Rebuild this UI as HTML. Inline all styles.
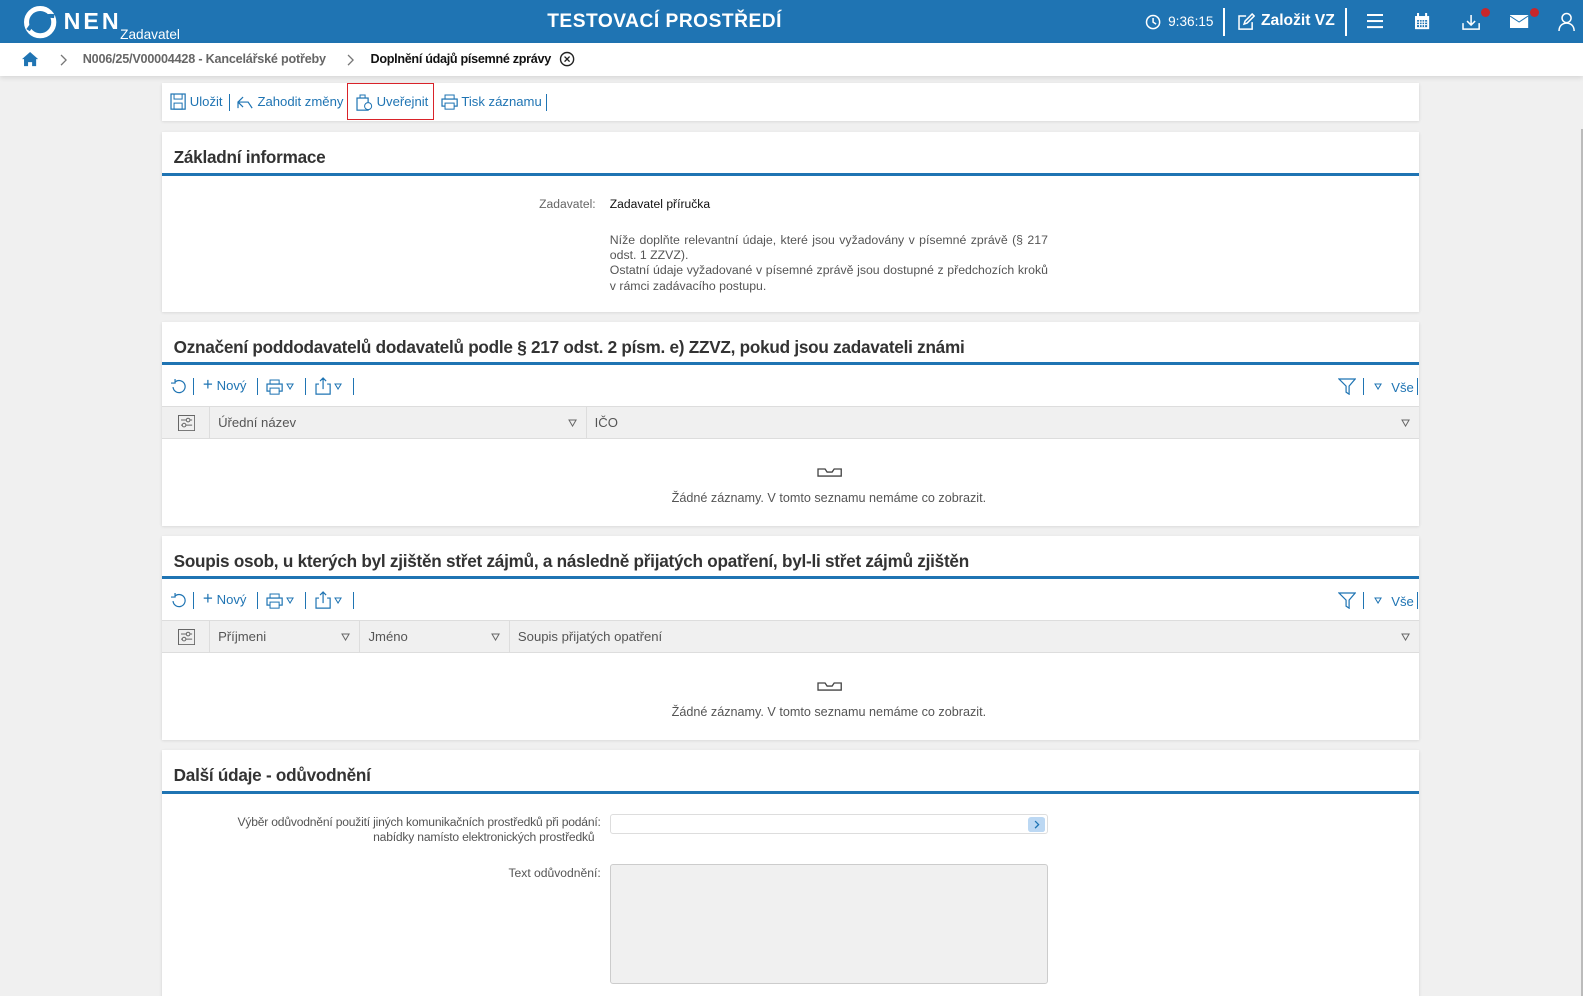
<!DOCTYPE html>
<html><head><meta charset="utf-8">
<style>
*{box-sizing:border-box;margin:0;padding:0}
html,body{width:1583px;height:996px;overflow:hidden}
body{background:#f0f0f0;font-family:"Liberation Sans",Arial,sans-serif;color:#333}
#w{position:relative;width:1568px;height:987px;zoom:1.0096}
.a{position:absolute;white-space:nowrap}
.hdr{left:0;top:0;width:1568px;height:43px;background:#1f74b3;color:#fff}
.bc{left:0;top:43px;width:1568px;height:32px;background:#fff;box-shadow:0 2px 5px rgba(0,0,0,.12);font-size:12.5px;font-weight:bold}
.card{background:#fff;left:160px;width:1246px;box-shadow:0 1px 3px rgba(0,0,0,.12)}
.title{position:absolute;left:12px;font-size:17px;letter-spacing:-0.25px;font-weight:bold;color:#333;white-space:nowrap}
.line{position:absolute;left:0;width:1246px;height:3px;background:#1f74b3}
.vs{position:absolute;width:1px;height:17px;background:#1f74b3}
.th{position:absolute;left:0;width:1246px;height:33px;background:#f0f0f0;border-top:1px solid #ddd;border-bottom:1px solid #ddd;font-size:13px;color:#555}
.th span{position:absolute;top:8px}
.cd{position:absolute;top:0;width:1px;height:31px;background:#ddd}
.tri{position:absolute;top:9px}
.empty{position:absolute;left:38px;width:1246px;text-align:center;font-size:12.5px;color:#555}
.t13{font-size:13px;color:#1f74b3}
</style></head><body><div id="w">
<div class="a hdr">
 <svg class="a" style="left:23px;top:5px" width="34" height="34" viewBox="0 0 34 34"><circle cx="17" cy="17" r="13.5" fill="none" stroke="#fff" stroke-width="5"/><path d="M5 25 Q15 9 31 11" stroke="#1f74b3" stroke-width="4" fill="none"/></svg>
 <div class="a" style="left:63px;top:8px;font-size:23px;font-weight:bold;letter-spacing:3px">NEN</div>
 <div class="a" style="left:119px;top:27px;font-size:13.5px">Zadavatel</div>
 <div class="a" style="left:542px;top:11px;font-size:19px;font-weight:bold;letter-spacing:0.5px">TESTOVACÍ PROSTŘEDÍ</div>
 <svg class="a" style="left:1134px;top:14px" width="16" height="16"><circle cx="8" cy="8" r="6.5" fill="none" stroke="#fff" stroke-width="1.5"/><path d="M8 4v4l3 2" stroke="#fff" stroke-width="1.5" fill="none"/></svg>
 <div class="a" style="left:1157px;top:14px;font-size:13.5px">9:36:15</div>
 <div class="a" style="left:1211px;top:8px;width:2px;height:28px;background:#fff"></div>
 <svg class="a" style="left:1225px;top:13px" width="18" height="18"><path d="M9 3H2v13h13V9" fill="none" stroke="#fff" stroke-width="1.5"/><path d="M7 11l1-3 7-7 2 2-7 7z" fill="none" stroke="#fff" stroke-width="1.5"/></svg>
 <div class="a" style="left:1249px;top:12px;font-size:15.5px;font-weight:bold">Založit VZ</div>
 <div class="a" style="left:1332px;top:8px;width:2px;height:28px;background:#fff"></div>
 <div class="a" style="left:1354px;top:14px;width:16px;height:2px;background:#fff;box-shadow:0 6px 0 #fff,0 12px 0 #fff"></div>
 <svg class="a" style="left:1401px;top:13px" width="16" height="17"><rect x="1" y="3" width="14" height="13" fill="#fff"/><rect x="3" y="7" width="10" height="7" fill="#1f74b3"/><path d="M3 9h10M3 11.5h10M5.5 7v7M8 7v7M10.5 7v7" stroke="#fff"/><path d="M4 0v4M12 0v4" stroke="#fff" stroke-width="2"/></svg>
 <svg class="a" style="left:1448px;top:13px" width="18" height="18"><path d="M1 10v6h16v-6M9 2v9M5 8l4 4 4-4" fill="none" stroke="#fff" stroke-width="1.5"/></svg>
 <div class="a" style="left:1467px;top:8px;width:9px;height:9px;border-radius:50%;background:#c8262a"></div>
 <svg class="a" style="left:1496px;top:15px" width="18" height="13"><rect x="0" y="0" width="18" height="13" fill="#fff"/><path d="M0 1l9 6 9-6" stroke="#1f74b3" fill="none"/></svg>
 <div class="a" style="left:1515px;top:8px;width:9px;height:9px;border-radius:50%;background:#c8262a"></div>
 <svg class="a" style="left:1543px;top:12px" width="17" height="19"><circle cx="8.5" cy="6" r="4.5" fill="none" stroke="#fff" stroke-width="1.5"/><path d="M1 19c0-5 3-8 7.5-8s7.5 3 7.5 8" fill="none" stroke="#fff" stroke-width="1.5"/></svg>
</div>
<div class="a bc">
 <svg class="a" style="left:21px;top:8px" width="18" height="16"><path d="M9 1L1 8h2v7h4v-4h4v4h4V8h2z" fill="#1f74b3"/></svg>
 <svg class="a" style="left:58px;top:10px" width="8" height="12"><path d="M2 1l5 5-5 5" stroke="#777" fill="none" stroke-width="1.3"/></svg>
 <div class="a" style="left:82px;top:9px;color:#666;letter-spacing:-0.2px">N006/25/V00004428 - Kancelářské potřeby</div>
 <svg class="a" style="left:343px;top:10px" width="8" height="12"><path d="M2 1l5 5-5 5" stroke="#777" fill="none" stroke-width="1.3"/></svg>
 <div class="a" style="left:367px;top:9px;color:#111;letter-spacing:-0.3px">Doplnění údajů písemné zprávy</div>
 <svg class="a" style="left:554px;top:8px" width="16" height="16"><circle cx="8" cy="8" r="6.5" fill="none" stroke="#222" stroke-width="1.4"/><path d="M5.5 5.5l5 5M10.5 5.5l-5 5" stroke="#222" stroke-width="1.3"/></svg>
</div>
<div class="a" style="left:1566px;top:128px;width:2px;height:868px;background:#bbb"></div>

<div class="a card" style="top:82px;height:38px">
 <svg class="a" style="left:8px;top:10px" width="16" height="17"><rect x="1" y="1" width="14" height="15" fill="none" stroke="#1f74b3" stroke-width="1.2"/><rect x="4" y="1" width="8" height="5" fill="none" stroke="#1f74b3"/><rect x="4" y="10" width="8" height="6" fill="none" stroke="#1f74b3"/></svg>
 <div class="a t13" style="left:28px;top:11px">Uložit</div>
 <div class="vs" style="left:67px;top:11px"></div>
 <svg class="a" style="left:75px;top:12px" width="18" height="14"><path d="M1 13V7h10l4 6M1 7l5-5M1 7l5 5" fill="none" stroke="#1f74b3" stroke-width="1.2"/></svg>
 <div class="a t13" style="left:95px;top:11px">Zahodit změny</div>
 <div class="vs" style="left:184px;top:11px"></div>
 <div class="a" style="left:184px;top:0;width:86px;height:37px;border:1px solid #d9232a"></div>
 <svg class="a" style="left:193px;top:11px" width="17" height="17"><rect x="1" y="4" width="11" height="12" fill="none" stroke="#1f74b3" stroke-width="1.2"/><path d="M4 4V1h5v3" fill="none" stroke="#1f74b3"/><circle cx="12" cy="12" r="3.5" fill="#fff" stroke="#1f74b3"/></svg>
 <div class="a t13" style="left:213px;top:11px">Uveřejnit</div>
 <svg class="a" style="left:277px;top:11px" width="17" height="16"><rect x="1" y="5" width="15" height="7" fill="none" stroke="#1f74b3" stroke-width="1.2"/><rect x="4" y="1" width="9" height="4" fill="none" stroke="#1f74b3"/><rect x="4" y="9" width="9" height="6" fill="#fff" stroke="#1f74b3"/></svg>
 <div class="a t13" style="left:297px;top:11px">Tisk záznamu</div>
 <div class="vs" style="left:381px;top:11px"></div>
</div>

<div class="a card" style="top:131px;height:178px">
 <div class="title" style="top:15px">Základní informace</div>
 <div class="line" style="top:40px"></div>
 <div class="a" style="left:374px;top:64px;font-size:12px;color:#666">Zadavatel:</div>
 <div class="a" style="left:444px;top:64px;font-size:12px;color:#111">Zadavatel příručka</div>
 <div class="a" style="left:444px;top:100px;width:434px;font-size:12.2px;color:#555;line-height:15px;text-align:justify;white-space:normal">Níže doplňte relevantní údaje, které jsou vyžadovány v písemné zprávě (§ 217 odst. 1 ZZVZ).<br>Ostatní údaje vyžadované v písemné zprávě jsou dostupné z předchozích kroků v rámci zadávacího postupu.</div>
</div>

<div class="a card" style="top:319px;height:202px">
 <div class="title" style="top:15px">Označení poddodavatelů dodavatelů podle § 217 odst. 2 písm. e) ZZVZ, pokud jsou zadavateli známi</div>
 <div class="line" style="top:40px"></div>
 <svg class="a" style="left:8px;top:55px" width="17" height="17"><path d="M3 9a6 6 0 1 0 2-5" fill="none" stroke="#1f74b3" stroke-width="1.2"/><path d="M5 1v4H1" fill="none" stroke="#1f74b3" stroke-width="1.2"/></svg>
 <div class="vs" style="left:31px;top:55px"></div>
 <div class="a t13" style="left:41px;top:55px"><span style="font-size:17px;line-height:13px">+</span> Nový</div>
 <div class="vs" style="left:95px;top:55px"></div>
 <svg class="a" style="left:103px;top:56px" width="17" height="16"><rect x="1" y="5" width="15" height="7" fill="none" stroke="#1f74b3" stroke-width="1.2"/><rect x="4" y="1" width="9" height="4" fill="none" stroke="#1f74b3"/><rect x="4" y="9" width="9" height="6" fill="#fff" stroke="#1f74b3"/></svg>
 <svg class="a" style="left:123px;top:60px" width="8" height="7"><path d="M1 1h6L4 6z" fill="none" stroke="#1f74b3"/></svg>
 <div class="vs" style="left:142px;top:55px"></div>
 <svg class="a" style="left:152px;top:54px" width="16" height="18"><path d="M4 7H1v10h14V7h-3M8 12V1M5 4l3-3 3 3" fill="none" stroke="#1f74b3" stroke-width="1.2"/></svg>
 <svg class="a" style="left:171px;top:60px" width="8" height="7"><path d="M1 1h6L4 6z" fill="none" stroke="#1f74b3"/></svg>
 <div class="vs" style="left:190px;top:55px"></div>
 <svg class="a" style="left:1165px;top:54px" width="18" height="18"><path d="M1 2h16l-6 7v8l-3-2V9z" fill="none" stroke="#1f74b3" stroke-width="1.2"/></svg>
 <div class="vs" style="left:1190px;top:55px"></div>
 <svg class="a" style="left:1201px;top:60px" width="8" height="7"><path d="M1 1h6L4 6z" fill="none" stroke="#1f74b3"/></svg>
 <div class="a t13" style="left:1218px;top:57px">Vše</div>
 <div class="vs" style="left:1244px;top:55px"></div>
 <div class="th" style="top:83px"><svg class="a" style="left:16px;top:8px" width="17" height="16"><rect x="0.5" y="0.5" width="16" height="15" fill="none" stroke="#666"/><path d="M3 5h11M3 10h11" stroke="#666"/><circle cx="10" cy="5" r="1.8" fill="#f0f0f0" stroke="#666"/><circle cx="6" cy="10" r="1.8" fill="#f0f0f0" stroke="#666"/></svg><div class="cd" style="left:47px"></div><span style="left:56px">Úřední název</span><svg class="tri" style="left:403px;top:12px" width="9" height="8"><path d="M1 1h7L4.5 7z" fill="none" stroke="#666"/></svg><div class="cd" style="left:420px"></div><span style="left:429px">IČO</span><svg class="tri" style="left:1228px;top:12px" width="9" height="8"><path d="M1 1h7L4.5 7z" fill="none" stroke="#666"/></svg></div>
 <svg class="a" style="left:649px;top:144px" width="25" height="10"><path d="M1 2h7l2 3h5l2-3h7v7H1z" fill="none" stroke="#444" stroke-width="1.3"/></svg>
 <div class="empty" style="top:167px">Žádné záznamy. V tomto seznamu nemáme co zobrazit.</div>
</div>

<div class="a card" style="top:531px;height:202px">
 <div class="title" style="top:15px">Soupis osob, u kterých byl zjištěn střet zájmů, a následně přijatých opatření, byl-li střet zájmů zjištěn</div>
 <div class="line" style="top:40px"></div>
 <svg class="a" style="left:8px;top:55px" width="17" height="17"><path d="M3 9a6 6 0 1 0 2-5" fill="none" stroke="#1f74b3" stroke-width="1.2"/><path d="M5 1v4H1" fill="none" stroke="#1f74b3" stroke-width="1.2"/></svg>
 <div class="vs" style="left:31px;top:55px"></div>
 <div class="a t13" style="left:41px;top:55px"><span style="font-size:17px;line-height:13px">+</span> Nový</div>
 <div class="vs" style="left:95px;top:55px"></div>
 <svg class="a" style="left:103px;top:56px" width="17" height="16"><rect x="1" y="5" width="15" height="7" fill="none" stroke="#1f74b3" stroke-width="1.2"/><rect x="4" y="1" width="9" height="4" fill="none" stroke="#1f74b3"/><rect x="4" y="9" width="9" height="6" fill="#fff" stroke="#1f74b3"/></svg>
 <svg class="a" style="left:123px;top:60px" width="8" height="7"><path d="M1 1h6L4 6z" fill="none" stroke="#1f74b3"/></svg>
 <div class="vs" style="left:142px;top:55px"></div>
 <svg class="a" style="left:152px;top:54px" width="16" height="18"><path d="M4 7H1v10h14V7h-3M8 12V1M5 4l3-3 3 3" fill="none" stroke="#1f74b3" stroke-width="1.2"/></svg>
 <svg class="a" style="left:171px;top:60px" width="8" height="7"><path d="M1 1h6L4 6z" fill="none" stroke="#1f74b3"/></svg>
 <div class="vs" style="left:190px;top:55px"></div>
 <svg class="a" style="left:1165px;top:54px" width="18" height="18"><path d="M1 2h16l-6 7v8l-3-2V9z" fill="none" stroke="#1f74b3" stroke-width="1.2"/></svg>
 <div class="vs" style="left:1190px;top:55px"></div>
 <svg class="a" style="left:1201px;top:60px" width="8" height="7"><path d="M1 1h6L4 6z" fill="none" stroke="#1f74b3"/></svg>
 <div class="a t13" style="left:1218px;top:57px">Vše</div>
 <div class="vs" style="left:1244px;top:55px"></div>
 <div class="th" style="top:83px"><svg class="a" style="left:16px;top:8px" width="17" height="16"><rect x="0.5" y="0.5" width="16" height="15" fill="none" stroke="#666"/><path d="M3 5h11M3 10h11" stroke="#666"/><circle cx="10" cy="5" r="1.8" fill="#f0f0f0" stroke="#666"/><circle cx="6" cy="10" r="1.8" fill="#f0f0f0" stroke="#666"/></svg><div class="cd" style="left:47px"></div><span style="left:56px">Příjmeni</span><svg class="tri" style="left:178px;top:12px" width="9" height="8"><path d="M1 1h7L4.5 7z" fill="none" stroke="#666"/></svg><div class="cd" style="left:196px"></div><span style="left:205px">Jméno</span><svg class="tri" style="left:326px;top:12px" width="9" height="8"><path d="M1 1h7L4.5 7z" fill="none" stroke="#666"/></svg><div class="cd" style="left:344px"></div><span style="left:353px">Soupis přijatých opatření</span><svg class="tri" style="left:1228px;top:12px" width="9" height="8"><path d="M1 1h7L4.5 7z" fill="none" stroke="#666"/></svg></div>
 <svg class="a" style="left:649px;top:144px" width="25" height="10"><path d="M1 2h7l2 3h5l2-3h7v7H1z" fill="none" stroke="#444" stroke-width="1.3"/></svg>
 <div class="empty" style="top:167px">Žádné záznamy. V tomto seznamu nemáme co zobrazit.</div>
</div>

<div class="a card" style="top:743px;height:253px">
 <div class="title" style="top:15px">Další údaje - odůvodnění</div>
 <div class="line" style="top:40px"></div>
 <div class="a" style="left:0;top:64px;width:435px;text-align:right;font-size:12px;color:#555;line-height:15px;letter-spacing:-0.2px">Výběr odůvodnění použití jiných komunikačních prostředků při podání:<br>nabídky namísto elektronických prostředků&nbsp;&nbsp;</div>
 <div class="a" style="left:444px;top:63px;width:434px;height:20px;border:1px solid #ddd;border-radius:3px"><svg class="a" style="right:2px;top:2px" width="17" height="15"><rect width="17" height="15" rx="3" fill="#bcd8f3"/><path d="M7 4l3.5 3.5L7 11" stroke="#1f74b3" fill="none" stroke-width="1.3"/></svg></div>
 <div class="a" style="left:0;top:115px;width:435px;text-align:right;font-size:12px;color:#555">Text odůvodnění:</div>
 <div class="a" style="left:444px;top:113px;width:434px;height:119px;border:1px solid #ccc;border-radius:3px;background:#f0f0f0"></div>
</div>
</div></body></html>
